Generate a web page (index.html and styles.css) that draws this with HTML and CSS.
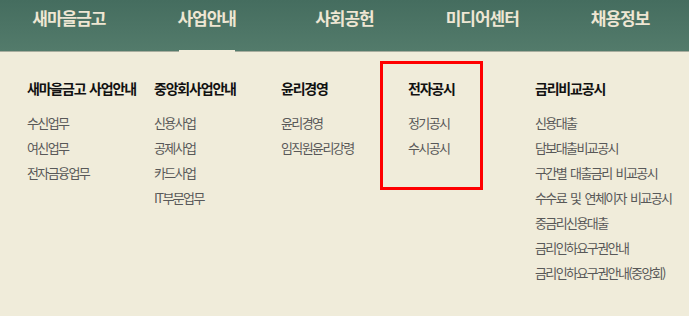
FILE: index.html
```html
<!DOCTYPE html>
<html lang="ko">
<head>
<meta charset="utf-8">
<link rel="stylesheet" href="styles.css">
</head>
<body>
<div class="page">
  <nav class="gnb">
    <a class="gnb-item">새마을금고</a>
    <a class="gnb-item active">사업안내</a>
    <a class="gnb-item">사회공헌</a>
    <a class="gnb-item">미디어센터</a>
    <a class="gnb-item">채용정보</a>
  </nav>
  <div class="dropdown">
    <div class="col">
      <h3 class="col-title">새마을금고 사업안내</h3>
      <ul class="col-list">
        <li>수신업무</li>
        <li>여신업무</li>
        <li>전자금융업무</li>
      </ul>
    </div>
    <div class="col">
      <h3 class="col-title">중앙회사업안내</h3>
      <ul class="col-list">
        <li>신용사업</li>
        <li>공제사업</li>
        <li>카드사업</li>
        <li>IT부문업무</li>
      </ul>
    </div>
    <div class="col">
      <h3 class="col-title">윤리경영</h3>
      <ul class="col-list">
        <li>윤리경영</li>
        <li>임직원윤리강령</li>
      </ul>
    </div>
    <div class="col">
      <h3 class="col-title">전자공시</h3>
      <ul class="col-list">
        <li>정기공시</li>
        <li>수시공시</li>
      </ul>
    </div>
    <div class="col">
      <h3 class="col-title">금리비교공시</h3>
      <ul class="col-list">
        <li>신용대출</li>
        <li>담보대출비교공시</li>
        <li>구간별 대출금리 비교공시</li>
        <li>수수료 및 연체이자 비교공시</li>
        <li>중금리신용대출</li>
        <li>금리인하요구권안내</li>
        <li>금리인하요구권안내(중앙회)</li>
      </ul>
    </div>
    <div class="highlight"></div>
  </div>
</div>
</body>
</html>
```
FILE: styles.css
```css
* { box-sizing: border-box; }
html, body {
  margin: 0;
  padding: 0;
  background: #f0ecda;
  font-family: "Noto Sans CJK KR", "Noto Sans", sans-serif;
}
.page {
  width: 689px;
  height: 316px;
  overflow: hidden;
}
.gnb {
  display: grid;
  grid-template-columns: repeat(5, 1fr);
  height: 52px;
  background: linear-gradient(#456d5f, #537b6b);
  border-bottom: 1px solid #a7ad9e;
}
.gnb-item {
  position: relative;
  display: flex;
  justify-content: center;
  padding-top: 6px;
  color: #eee6d3;
  font-size: 17px;
  font-weight: 700;
  letter-spacing: -1px;
  line-height: 24px;
}
.gnb-item.active::after {
  content: "";
  position: absolute;
  left: 50%;
  bottom: -1px;
  width: 56px;
  margin-left: -28px;
  height: 2px;
  background: #f0ecda;
}
.dropdown {
  position: relative;
  display: grid;
  grid-template-columns: repeat(5, 127px);
  padding: 26px 0 0 27px;
}
.col-title {
  margin: 0;
  font-size: 14px;
  font-weight: 700;
  letter-spacing: -1.2px;
  word-spacing: 1px;
  line-height: 20px;
  color: #111;
}
.col-list {
  list-style: none;
  margin: 12px 0 0;
  padding: 0;
}
.col-list li {
  font-size: 13px;
  letter-spacing: -1.6px;
  word-spacing: 2px;
  line-height: 25px;
  color: #585858;
  white-space: nowrap;
}
.highlight {
  position: absolute;
  left: 380px;
  top: 9px;
  width: 103px;
  height: 129px;
  border: 3px solid #f00;
}
```
